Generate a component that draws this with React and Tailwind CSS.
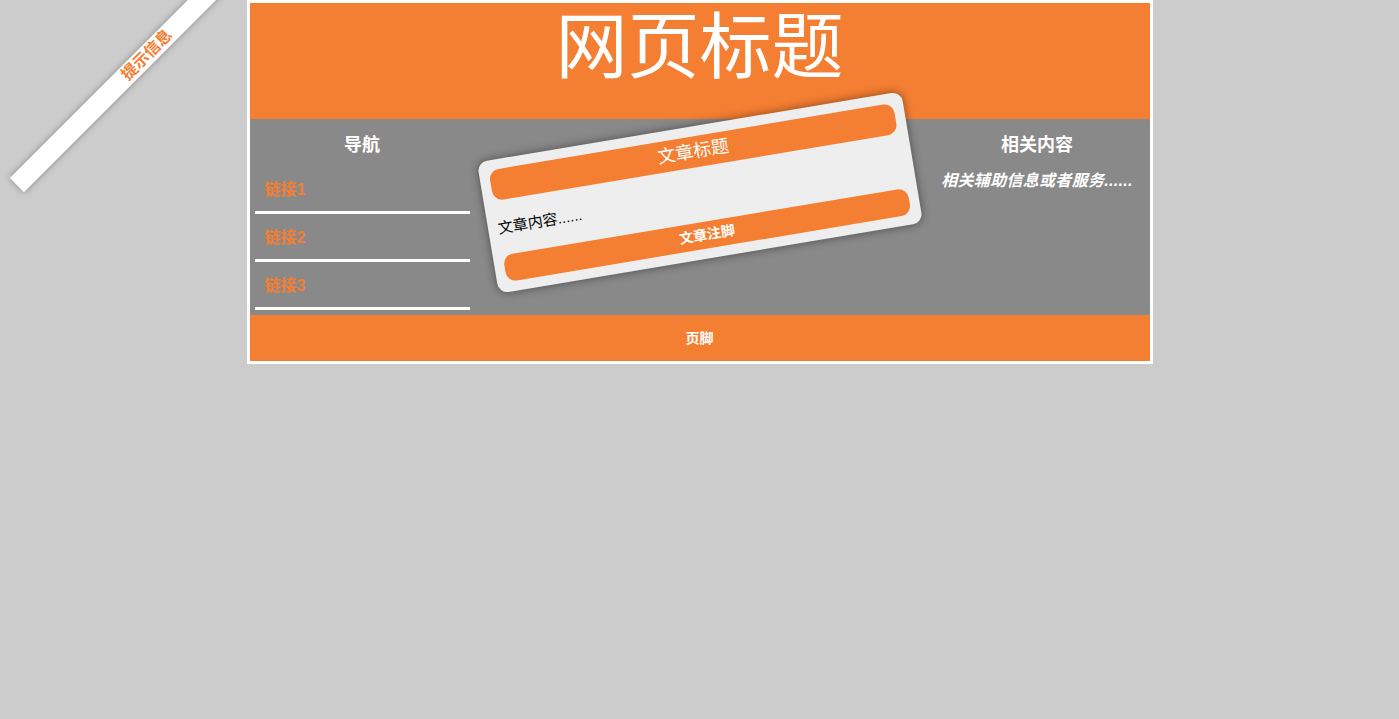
export default function App() {
  const font = "font-['Liberation_Sans','Noto_Sans_CJK_SC',sans-serif]";
  const links = ["链接1", "链接2", "链接3"];

  return (
    <div className={`relative min-h-screen overflow-hidden bg-[#cccccc] ${font}`}>
      {/* corner ribbon */}
      <div className="absolute left-[-37px] top-[45px] w-[368px] h-[20px] -rotate-45 bg-white shadow-[0_0_6px_rgba(0,0,0,0.35)] text-center text-[16px] leading-[20px] font-bold text-[#f47e32] z-10">
        提示信息
      </div>

      <div className="w-[906px] mx-auto border-[3px] border-white">
        <header className="h-[116px] bg-[#f47e32] text-center pt-[8px]">
          <h1 className="text-white text-[72px] leading-[72px]">网页标题</h1>
        </header>

        <main className="flex bg-[#898989] h-[196px]">
          <nav className="w-[225px] px-[5px] pt-[5px]">
            <h3 className="mt-[11px] mb-[11px] text-center text-white text-[18px] leading-[20px] font-bold">导航</h3>
            {links.map((l) => (
              <div
                key={l}
                className="h-[48px] flex items-center pl-[10px] pt-[3px] border-b-[3px] border-white text-[#f47e32] text-[16px] font-bold"
              >
                {l}
              </div>
            ))}
          </nav>

          <section className="flex-1 pt-[7px]">
            <article className="w-[430px] mx-auto p-[10px] rounded-[10px] bg-[#eeeeee] -rotate-[9.5deg] shadow-[0_0_10px_rgba(0,0,0,0.45)]">
              <div className="h-[31px] rounded-[10px] bg-[#f47e32] flex items-center justify-center text-white text-[18px]">
                文章标题
              </div>
              <p className="mt-[19px] mb-[18px] text-black text-[15px] leading-[18px]">文章内容......</p>
              <div className="h-[27px] rounded-[10px] bg-[#f47e32] flex items-center justify-center text-white text-[14px] font-bold">
                文章注脚
              </div>
            </article>
          </section>

          <aside className="w-[225px] px-[5px] pt-[5px] text-center text-white">
            <h3 className="mt-[11px] text-[18px] leading-[20px] font-bold">相关内容</h3>
            <p className="mt-[16px] text-[16px] leading-[20px] font-bold italic tracking-[0.3px]">相关辅助信息或者服务......</p>
          </aside>
        </main>

        <footer className="h-[46px] bg-[#f47e32] flex items-center justify-center text-white text-[14px] font-bold">
          页脚
        </footer>
      </div>
    </div>
  );
}
